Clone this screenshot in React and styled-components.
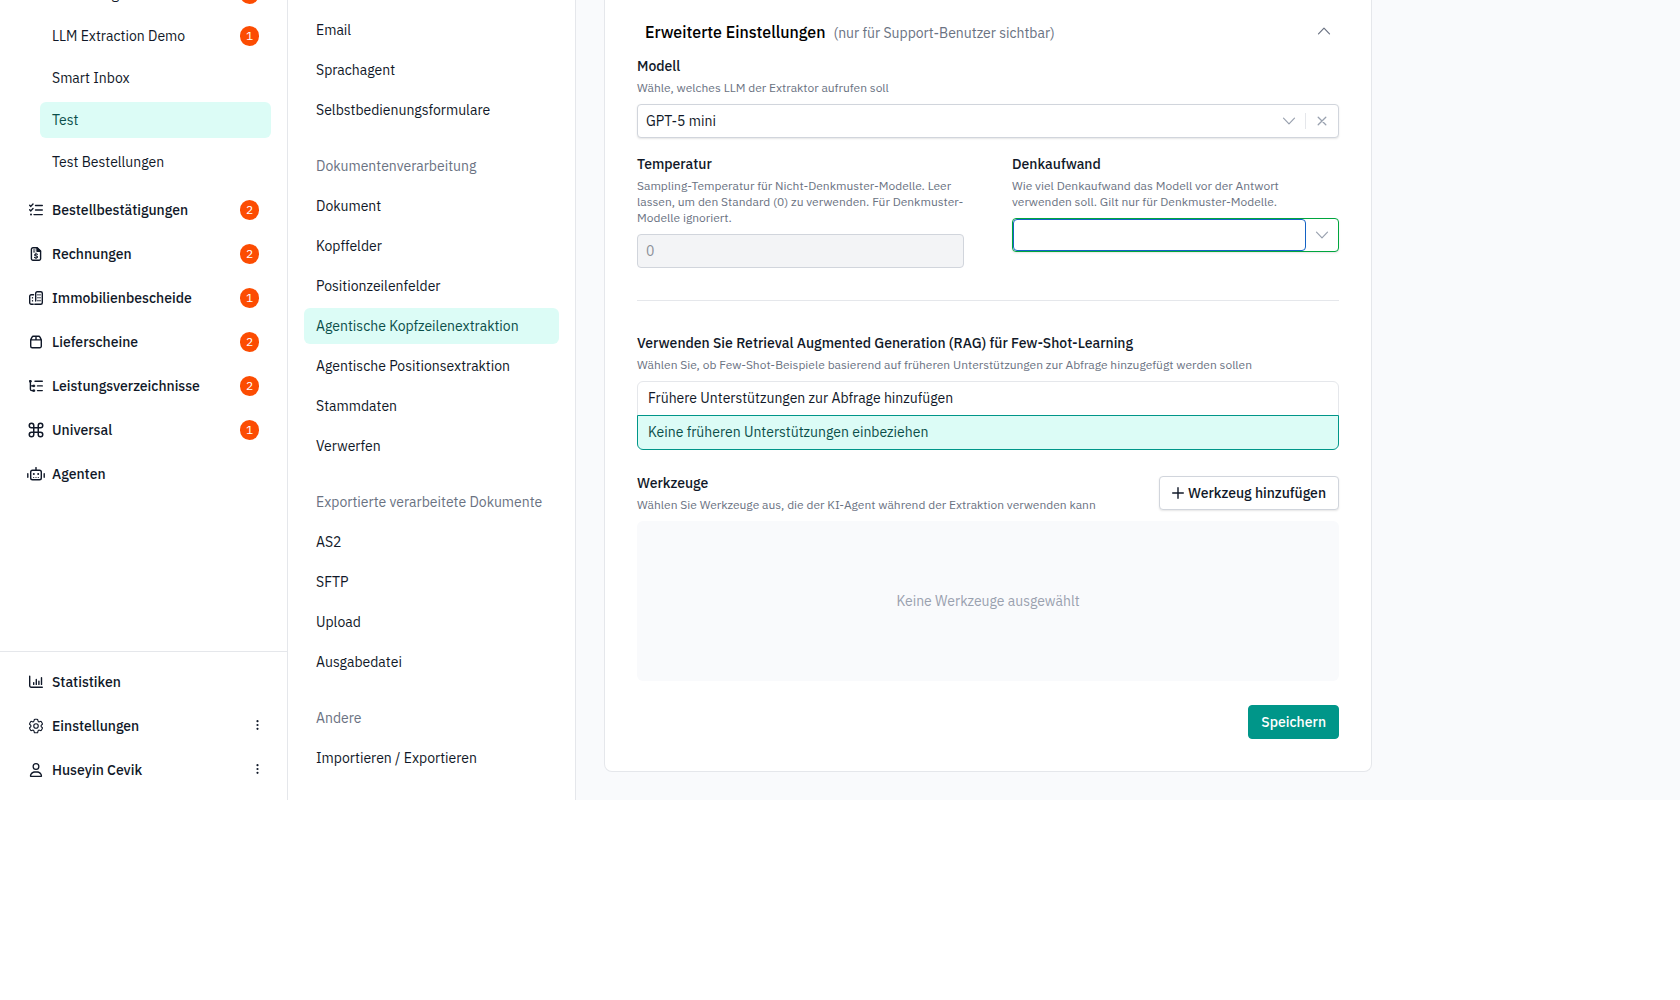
import React, { useState } from "react";
import styled, { createGlobalStyle, css } from "styled-components";
import { HiOutlineCog6Tooth } from "react-icons/hi2";
import { FaRegUser } from "react-icons/fa6";
import { Command } from "lucide-react";

const GlobalStyle = createGlobalStyle`
  * {
    box-sizing: border-box;
  }
  body {
    margin: 0;
    background: #ffffff;
    color: #101828;
    font-family: "IBM Plex Sans", Roboto, sans-serif;
    font-size: 14px;
    line-height: 20px;
  }
  button, input, select {
    font: inherit;
    color: inherit;
  }
`;

const Layout = styled.div`
  display: grid;
  grid-template-columns: 288px 288px minmax(0, 1fr);
`;
const Sidebar = styled.aside`
  display: flex;
  flex-direction: column;
  overflow: hidden;
  border-right: 1px solid #e5e7eb;
`;
const NavArea = styled.nav`
  /* list is scrolled, first entry is half out of view */
  margin-top: -24px;
  padding: 0 16px;
`;
const SubList = styled.div`
  display: flex;
  flex-direction: column;
  gap: 6px;
  padding-left: 24px;
  margin-bottom: 12px;
`;
const MainList = styled.div`
  display: flex;
  flex-direction: column;
  gap: 8px;
`;
const activeItem = css`
  background: #dcfcf6;
  color: #0b4f4a;
`;
const NavItem = styled.a`
  display: flex;
  align-items: center;
  gap: 8px;
  height: 36px;
  padding: 0 12px;
  border-radius: 6px;
  color: #101828;
  text-decoration: none;
  font-weight: ${(props) => (props.$strong ? 500 : 400)};
  ${(props) => props.$active && activeItem}
`;
const NavLabel = styled.span`
  flex: 1;
`;
const IconSlot = styled.span`
  display: flex;
  justify-content: center;
  align-items: center;
  width: 16px;
  svg {
    flex: none;
  }
`;
const Badge = styled.span`
  display: flex;
  justify-content: center;
  align-items: center;
  width: 19px;
  height: 20px;
  border-radius: 10px;
  background: #fc4c02;
  color: #ffffff;
  font-size: 12px;
  font-weight: 400;
`;
const SidebarFooter = styled.nav`
  display: flex;
  flex-direction: column;
  gap: 8px;
  margin-top: auto;
  padding: 12px 16px;
  border-top: 1px solid #e5e7eb;
`;

const SettingsNav = styled.nav`
  display: flex;
  flex-direction: column;
  gap: 20px;
  padding: 12px 16px 24px;
  border-right: 1px solid #e5e7eb;
`;
const NavGroup = styled.div`
  display: flex;
  flex-direction: column;
  gap: 4px;
`;
const GroupTitle = styled.div`
  padding: 8px 12px;
  color: #6a7282;
`;

const Content = styled.main`
  padding: 0 28px 28px;
  background: #f9fafc;
`;
const Card = styled.section`
  max-width: 768px;
  padding: 20px 32px 32px;
  background: #ffffff;
  border: 1px solid #e5e7eb;
  border-top: none;
  border-radius: 0 0 8px 8px;
`;
const CardHeader = styled.div`
  display: flex;
  align-items: baseline;
  gap: 8px;
  padding: 0 8px 12px;
`;
const CardTitle = styled.h2`
  margin: 0;
  color: #000000;
  font-size: 16px;
  font-weight: 500;
  line-height: 24px;
`;
const CardHint = styled.span`
  flex: 1;
  color: #6a7282;
`;
const IconButton = styled.button`
  display: flex;
  justify-content: center;
  align-items: center;
  width: 32px;
  height: 20px;
  padding: 0;
  border: none;
  background: none;
  color: #99a1af;
  cursor: pointer;
`;
const CollapseButton = styled(IconButton)`
  align-self: flex-start;
  width: 14px;
  height: 22px;
  color: #6a7282;
`;

const Field = styled.div`
  display: flex;
  flex-direction: column;
`;
const FieldLabel = styled.label`
  font-weight: 500;
`;
const FieldHint = styled.p`
  margin: 4px 0 8px;
  color: #6a7282;
  font-size: 12px;
  line-height: 16px;
`;
const FieldRow = styled.div`
  display: grid;
  grid-template-columns: 1fr 1fr;
  gap: 48px;
  margin-top: 16px;
`;
const Control = styled.div`
  display: flex;
  align-items: center;
  height: 34px;
  border: 1px solid ${(props) => (props.$focused ? "#00a63e" : "#d1d5dc")};
  border-radius: 4px;
  background: #ffffff;
  box-shadow: 0 1px 2px rgba(0, 0, 0, 0.1);
`;
const ModelSelect = styled.select`
  flex: 1;
  height: 32px;
  padding: 0 8px;
  border: none;
  background: none;
  outline: none;
  appearance: none;
`;
const Separator = styled.span`
  width: 1px;
  height: 16px;
  background: #e5e7eb;
`;
const EffortInput = styled.input`
  flex: 1;
  min-width: 0;
  height: 32px;
  padding: 0 8px;
  border: 1px solid #1462c4;
  border-radius: 4px;
  background: none;
  outline: none;
`;
const TextInput = styled.input`
  height: 34px;
  padding: 0 8px;
  border: 1px solid #d1d5dc;
  border-radius: 4px;
  background: #f3f4f6;
  &::placeholder {
    color: #8b8f97;
    opacity: 1;
  }
`;
const Divider = styled.hr`
  height: 1px;
  margin: 32px 0;
  border: none;
  background: #e5e7eb;
`;

const RadioGroup = styled.fieldset`
  margin: 0;
  padding: 0;
  border: none;
`;
const RadioLegend = styled.legend`
  padding: 0;
  font-weight: 500;
`;
const RadioOption = styled.label`
  display: block;
  position: relative;
  padding: 6px 10px 7px;
  border: 1px solid #e5e7eb;
  cursor: pointer;
  &:first-of-type {
    border-radius: 6px 6px 0 0;
  }
  &:last-of-type {
    margin-top: -1px;
    border-radius: 0 0 6px 6px;
  }
  ${(props) =>
    props.$checked &&
    css`
      z-index: 1;
      border-color: #009689;
      background: #dcfcf6;
      color: #0b4f4a;
    `}
`;
const HiddenRadio = styled.input`
  position: absolute;
  margin: 0;
  opacity: 0;
`;

const ToolsHeader = styled.div`
  display: flex;
  justify-content: space-between;
  align-items: center;
  margin: 23px 0 8px;
`;
const ToolsTitle = styled.h3`
  margin: 0;
  font-size: 14px;
  font-weight: 500;
  line-height: 20px;
`;
const ToolsHint = styled.p`
  margin: 4px 0 0;
  color: #6a7282;
  font-size: 12px;
  line-height: 16px;
`;
const Button = styled.button`
  display: flex;
  align-items: center;
  gap: 4px;
  height: 34px;
  padding: 0 12px;
  border: 1px solid #d1d5dc;
  border-radius: 4px;
  background: #ffffff;
  box-shadow: 0 1px 2px rgba(0, 0, 0, 0.1);
  font-weight: 500;
  cursor: pointer;
`;
const PrimaryButton = styled(Button)`
  border-color: #009689;
  background: #009689;
  box-shadow: none;
  color: #ffffff;
`;
const EmptyTools = styled.div`
  display: flex;
  justify-content: center;
  align-items: center;
  height: 160px;
  border-radius: 6px;
  background: #f9fafc;
  color: #99a1af;
`;
const Actions = styled.div`
  display: flex;
  justify-content: flex-end;
  margin-top: 24px;
`;

const Icon = ({ width = 14, height = 14, stroke = 1.4, children }) => (
  <svg
    width={width}
    height={height}
    viewBox={`0 0 ${width} ${height}`}
    fill="none"
    stroke="currentColor"
    strokeWidth={stroke}
    strokeLinecap="round"
    strokeLinejoin="round"
    aria-hidden="true"
  >
    {children}
  </svg>
);

const ListCheckIcon = () => (
  <Icon>
    <path d="M.7 2.3l1.1 1.1L4 1M.7 6.8l1.1 1.1L4 5.5M6.500 2.500h6.800M6.500 7h6.800M5 11.600h8.300" />
    <circle cx="2" cy="11.6" r="1" fill="currentColor" stroke="none" />
  </Icon>
);
const InvoiceIcon = () => (
  <Icon>
    <path d="M2.4 2.2A1.5 1.5 0 013.9.7h4.3l3.4 3.4v7.7a1.5 1.5 0 01-1.5 1.5H3.9a1.5 1.5 0 01-1.5-1.5z" />
    <path d="M8 .9v3.4h3.4z" fill="currentColor" />
    <path d="M4.5 3h1.6M4.5 4.9h1.3" strokeWidth="1" />
    <path
      d="M8.4 7.3c-.8-.4-2.7-.5-2.7.6 0 1.3 2.8.7 2.8 2 0 1.1-2 1-2.9.5M7 6.2v.7m0 3.9v.7"
      strokeWidth="1.2"
    />
  </Icon>
);
const BuildingsIcon = () => (
  <Icon>
    <path d="M5.8 13.3h6a1.5 1.5 0 001.5-1.5V2.2A1.5 1.5 0 0011.8.7H8.2a1.5 1.5 0 00-1.5 1.5v7.8" />
    <path d="M4.6 3.7H2.2A1.5 1.5 0 00.7 5.200v6.6a1.5 1.5 0 001.5 1.5h2" />
    <path d="M3.5 6.7v.2M3.5 9.7v.2M9 3.7v.2M11 3.7v.2M9 6.6v.2M11 6.6v.2M9 9.5v.2M11 9.5v.2" />
  </Icon>
);
const BoxIcon = () => (
  <Icon>
    <path d="M1.7 4.9L3 2.1a1.5 1.5 0 011.4-.9h5.2a1.5 1.5 0 011.4.9l1.3 2.8v6.4a1.5 1.5 0 01-1.5 1.5H3.2a1.5 1.5 0 01-1.5-1.5zM1.7 4.9h10.600M7 1.3v3.5" />
  </Icon>
);
const ListTreeIcon = () => (
  <Icon>
    <path d="M1.4 2v8.2a1.4 1.4 0 001.4 1.4h1.5M1.4 6.9h2.9M6 2.3h7.3M8.5 6.9h4.8M8.5 11.6h4.800" />
    <path
      d="M.7 1.6h1.5v1.4H.7zM4.200 6.200h1.5v1.4H4.200zM4.200 10.900h1.5v1.4H4.200z"
      fill="currentColor"
      strokeWidth="1"
    />
  </Icon>
);
const RobotIcon = () => (
  <Icon width={18}>
    <rect x="3.7" y="3.2" width="10.6" height="9.6" rx="1.8" />
    <path d="M9 .6v2.6M.8 6.7v3.5M17.2 6.7v3.500" />
    <path d="M6.600 10.500h.2M8.900 10.500h.2M11.200 10.500h.2" strokeWidth="1" />
    <circle cx="6.8" cy="7" r="1" fill="currentColor" stroke="none" />
    <circle cx="11.2" cy="7" r="1" fill="currentColor" stroke="none" />
  </Icon>
);
const ChartIcon = () => (
  <Icon>
    <path d="M.7 1.2v9.600a1.5 1.5 0 001.5 1.5h11.1M4.7 7.600v1.800M7.300 4.500v4.900M9.900 6.200v3.200M12.500 2.800v6.600" />
  </Icon>
);
const DotsIcon = () => (
  <svg width="3" height="12" viewBox="0 0 3 12" fill="currentColor" aria-hidden="true">
    <circle cx="1.5" cy="1.2" r="1.1" />
    <circle cx="1.5" cy="5" r="1.1" />
    <circle cx="1.5" cy="8.8" r="1.1" />
  </svg>
);
const ChevronIcon = ({ up }) => (
  <Icon height={8} stroke={1.2}>
    <path d={up ? "M1.5 6.8L7 1.2l5.5 5.6" : "M1.5 1.2L7 6.8l5.5-5.6"} />
  </Icon>
);
const CloseIcon = () => (
  <Icon width={10} height={10} stroke={1.3}>
    <path d="M1.2 1.2l7.6 7.6M8.8 1.2L1.2 8.8" />
  </Icon>
);
const PlusIcon = () => (
  <Icon width={12} height={12}>
    <path d="M6 .7v10.600M.7 6h10.600" />
  </Icon>
);

const subItems = [
  { label: "Bestellungen", count: 1 },
  { label: "LLM Extraction Demo", count: 1 },
  { label: "Smart Inbox" },
  { label: "Test", active: true },
  { label: "Test Bestellungen" },
];

const mainItems = [
  { label: "Bestellbestätigungen", icon: <ListCheckIcon />, count: 2 },
  { label: "Rechnungen", icon: <InvoiceIcon />, count: 2 },
  { label: "Immobilienbescheide", icon: <BuildingsIcon />, count: 1 },
  { label: "Lieferscheine", icon: <BoxIcon />, count: 2 },
  { label: "Leistungsverzeichnisse", icon: <ListTreeIcon />, count: 2 },
  { label: "Universal", icon: <Command size={18} />, count: 1 },
  { label: "Agenten", icon: <RobotIcon /> },
];

const footerItems = [
  { label: "Statistiken", icon: <ChartIcon /> },
  { label: "Einstellungen", icon: <HiOutlineCog6Tooth size={18} />, menu: true },
  { label: "Huseyin Cevik", icon: <FaRegUser size={14} />, menu: true },
];

const settingsGroups = [
  { items: ["Email", "Sprachagent", "Selbstbedienungsformulare"] },
  {
    title: "Dokumentenverarbeitung",
    items: [
      "Dokument",
      "Kopffelder",
      "Positionzeilenfelder",
      "Agentische Kopfzeilenextraktion",
      "Agentische Positionsextraktion",
      "Stammdaten",
      "Verwerfen",
    ],
  },
  {
    title: "Exportierte verarbeitete Dokumente",
    items: ["AS2", "SFTP", "Upload", "Ausgabedatei"],
  },
  { title: "Andere", items: ["Importieren / Exportieren"] },
];

const ragOptions = [
  { value: "add", label: "Frühere Unterstützungen zur Abfrage hinzufügen" },
  { value: "none", label: "Keine früheren Unterstützungen einbeziehen" },
];

const NavEntry = ({ item, strong }) => (
  <NavItem href="#" $strong={strong} $active={item.active}>
    {item.icon && <IconSlot>{item.icon}</IconSlot>}
    <NavLabel>{item.label}</NavLabel>
    {item.count && <Badge>{item.count}</Badge>}
    {item.menu && <DotsIcon />}
  </NavItem>
);

const App = () => {
  const [rag, setRag] = useState("none");
  const [effort, setEffort] = useState("");

  return (
    <>
      <GlobalStyle />
      <Layout>
        <Sidebar>
          <NavArea>
            <SubList>
              {subItems.map((item) => (
                <NavEntry key={item.label} item={item} />
              ))}
            </SubList>
            <MainList>
              {mainItems.map((item) => (
                <NavEntry key={item.label} item={item} strong />
              ))}
            </MainList>
          </NavArea>
          <SidebarFooter>
            {footerItems.map((item) => (
              <NavEntry key={item.label} item={item} strong />
            ))}
          </SidebarFooter>
        </Sidebar>

        <SettingsNav>
          {settingsGroups.map((group, i) => (
            <NavGroup key={i}>
              {group.title && <GroupTitle>{group.title}</GroupTitle>}
              {group.items.map((label) => (
                <NavItem
                  key={label}
                  href="#"
                  $active={label === "Agentische Kopfzeilenextraktion"}
                >
                  {label}
                </NavItem>
              ))}
            </NavGroup>
          ))}
        </SettingsNav>

        <Content>
          <Card>
            <CardHeader>
              <CardTitle>Erweiterte Einstellungen</CardTitle>
              <CardHint>(nur für Support-Benutzer sichtbar)</CardHint>
              <CollapseButton type="button" aria-label="Einklappen">
                <ChevronIcon up />
              </CollapseButton>
            </CardHeader>

            <Field>
              <FieldLabel htmlFor="model">Modell</FieldLabel>
              <FieldHint>Wähle, welches LLM der Extraktor aufrufen soll</FieldHint>
              <Control>
                <ModelSelect id="model" defaultValue="gpt-5-mini">
                  <option value="gpt-5-mini">GPT-5 mini</option>
                </ModelSelect>
                <IconButton as="span">
                  <ChevronIcon />
                </IconButton>
                <Separator />
                <IconButton type="button" aria-label="Auswahl löschen">
                  <CloseIcon />
                </IconButton>
              </Control>
            </Field>

            <FieldRow>
              <Field>
                <FieldLabel htmlFor="temperature">Temperatur</FieldLabel>
                <FieldHint>
                  Sampling-Temperatur für Nicht-Denkmuster-Modelle. Leer lassen,
                  um den Standard (0) zu verwenden. Für Denkmuster-Modelle
                  ignoriert.
                </FieldHint>
                <TextInput id="temperature" placeholder="0" disabled />
              </Field>
              <Field>
                <FieldLabel htmlFor="effort">Denkaufwand</FieldLabel>
                <FieldHint>
                  Wie viel Denkaufwand das Modell vor der Antwort verwenden
                  soll. Gilt nur für Denkmuster-Modelle.
                </FieldHint>
                <Control $focused>
                  <EffortInput
                    id="effort"
                    value={effort}
                    onChange={(e) => setEffort(e.target.value)}
                  />
                  <IconButton type="button" aria-label="Optionen anzeigen">
                    <ChevronIcon />
                  </IconButton>
                </Control>
              </Field>
            </FieldRow>

            <Divider />

            <RadioGroup>
              <RadioLegend>
                Verwenden Sie Retrieval Augmented Generation (RAG) für
                Few-Shot-Learning
              </RadioLegend>
              <FieldHint>
                Wählen Sie, ob Few-Shot-Beispiele basierend auf früheren
                Unterstützungen zur Abfrage hinzugefügt werden sollen
              </FieldHint>
              {ragOptions.map((option) => (
                <RadioOption key={option.value} $checked={rag === option.value}>
                  <HiddenRadio
                    type="radio"
                    name="rag"
                    checked={rag === option.value}
                    onChange={() => setRag(option.value)}
                  />
                  {option.label}
                </RadioOption>
              ))}
            </RadioGroup>

            <ToolsHeader>
              <div>
                <ToolsTitle>Werkzeuge</ToolsTitle>
                <ToolsHint>
                  Wählen Sie Werkzeuge aus, die der KI-Agent während der
                  Extraktion verwenden kann
                </ToolsHint>
              </div>
              <Button type="button">
                <PlusIcon />
                Werkzeug hinzufügen
              </Button>
            </ToolsHeader>
            <EmptyTools>Keine Werkzeuge ausgewählt</EmptyTools>

            <Actions>
              <PrimaryButton type="button">Speichern</PrimaryButton>
            </Actions>
          </Card>
        </Content>
      </Layout>
    </>
  );
};

export default App;
